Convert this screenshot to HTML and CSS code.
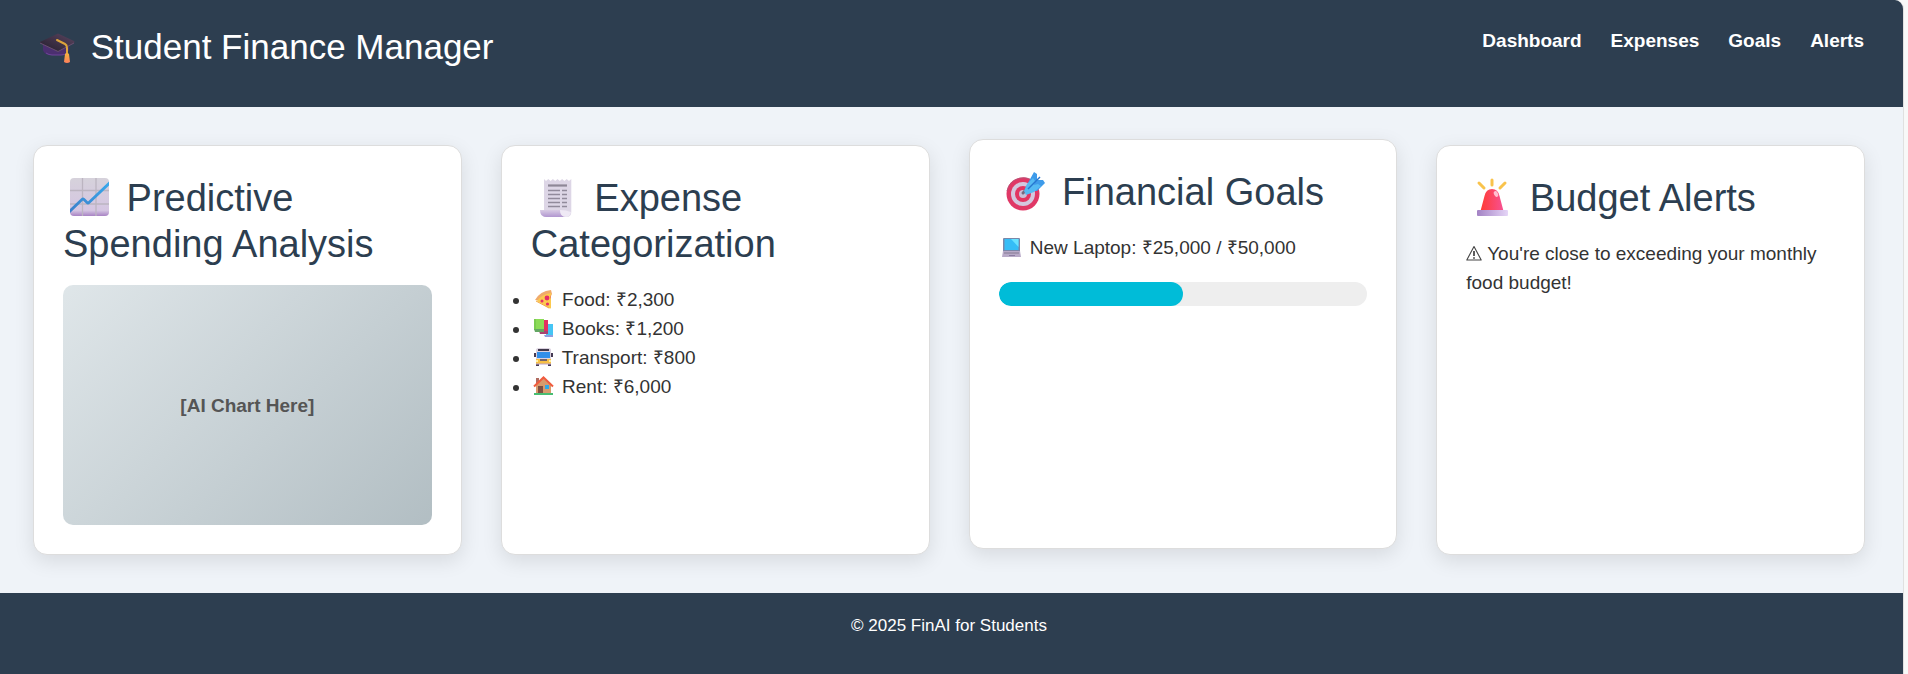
FILE: index.html
```html
<!DOCTYPE html>
<html lang="en">
<head>
<meta charset="utf-8">
<meta name="viewport" content="width=device-width, initial-scale=1">
<title>Student Finance Manager</title>
<link rel="stylesheet" href="styles.css">
</head>
<body>
<div class="page">
  <header class="header">
    <h1 class="title"><svg class="icon-title" viewBox="0 0 47 36" aria-hidden="true">
      <defs>
        <linearGradient id="cap" x1="0" y1="1" x2="1" y2="0"><stop offset="0" stop-color="#231d2c"/><stop offset="1" stop-color="#5b4560"/></linearGradient>
        <linearGradient id="tassel" x1="0" y1="0" x2="0" y2="1"><stop offset="0" stop-color="#f3b33f"/><stop offset="1" stop-color="#ff7f5c"/></linearGradient>
      </defs>
      <path d="M9 14v6q1 5 8 5h10q6 0 8-5v-7z" fill="#4b2f70"/>
      <path d="M12 23q3 2 6 2h9q4 0 6-2" fill="none" stroke="#70439a"/>
      <path d="M6 12 23 4q1-1 2 0l15 7q1 1 0 2l-15 8q-1 1-2 0L6 13z" fill="url(#cap)"/>
      <path d="m6 13 17 8q1 1 2 0l15-8" fill="none" stroke="#685070"/>
      <path d="m23 10 8 4q2 1 2 4v7" fill="none" stroke="#dda43c" stroke-width="2" stroke-linecap="round"/>
      <path d="M31 24q2-2 4 0l1 8q-3 2-6 0z" fill="url(#tassel)"/>
    </svg> Student Finance Manager</h1>
    <nav class="nav" aria-label="Main">
      <a href="#dashboard">Dashboard</a>
      <a href="#expenses">Expenses</a>
      <a href="#goals">Goals</a>
      <a href="#alerts">Alerts</a>
    </nav>
  </header>

  <main class="cards">
    <section class="card" id="dashboard">
      <h2><svg class="icon-heading" viewBox="0 0 53 40" aria-hidden="true">
        <defs>
          <linearGradient id="sheet" x1="0" y1="0" x2="0" y2="1"><stop offset="0" stop-color="#d6d2db"/><stop offset=".85" stop-color="#d5c6e2"/><stop offset="1" stop-color="#a883c4"/></linearGradient>
          <linearGradient id="trend" x1="0" y1="1" x2="1" y2="0"><stop offset="0" stop-color="#3d7fc9"/><stop offset="1" stop-color="#37a9ec"/></linearGradient>
          <clipPath id="sheetclip"><rect x="7" y="1" width="39" height="38" rx="4"/></clipPath>
        </defs>
        <g clip-path="url(#sheetclip)">
          <rect x="7" y="1" width="39" height="38" fill="url(#sheet)"/>
          <path d="M19.500 1v38M33 1v38M7 13.500h39M7 27h39" stroke="#bcb5c1" stroke-width="1.300"/>
          <path d="m6 35 13-12.500q1-1 2 0l3 3q1 1 2 0L47 5.500" fill="none" stroke="url(#trend)" stroke-width="2.800"/>
        </g>
      </svg> Predictive Spending Analysis</h2>
      <div class="chart">[AI Chart Here]</div>
    </section>

    <section class="card" id="expenses">
      <h2><svg class="icon-heading" viewBox="0 0 53 40" aria-hidden="true">
        <defs><linearGradient id="roll" x1="0" y1="0" x2="0" y2="1"><stop offset="0" stop-color="#d8cbe4"/><stop offset="1" stop-color="#b196d0"/></linearGradient></defs>
        <path d="m13 2 2 2 2.300-2 2.300 2 2.300-2 2.300 2 2.300-2 2.300 2 2.300-2 2.300 2 2.300-2 2.300 2 2.300-2v33q0 5-5 5H13z" fill="#ddd6e6"/>
        <path d="M9 33h20q1 7 6 7H15q-6 0-6-7z" fill="url(#roll)"/>
        <path d="M29 33q6 0 11 2-1 5-5 5-6 0-6-7z" fill="#efe9f5"/>
        <path d="M17 8.500h19" stroke="#8e8797" stroke-width="2.200"/>
        <path d="M17 13.500h12m2 0h5M17 17.500h12m2 0h5M17 21.500h12m2 0h5M17 25.500h12m2 0h5M17 29.500h12m2 0h5" stroke="#918a9b" stroke-width="1.400"/>
      </svg> Expense Categorization</h2>
      <ul class="expenses">
        <li><svg class="icon-text" viewBox="0 0 26 20" aria-hidden="true">
          <path d="M4 11Q9 2 20 1l1 4-4 8z" fill="#f0aa6b"/>
          <path d="M6 12Q11 5 20 4v15q-1 1-2 0z" fill="#fcc94e"/>
          <path d="M5 12 18 19" stroke="#f3a83f"/>
          <circle cx="16" cy="9" r="2.400" fill="#e52d68"/><circle cx="11" cy="12" r="1.500" fill="#e52d68"/><circle cx="16.500" cy="15" r="1.600" fill="#e52d68"/><path d="M20 6v4q-1-2 0-4" fill="#e52d68"/>
        </svg> Food: ₹2,300</li>
        <li><svg class="icon-text" viewBox="0 0 26 20" aria-hidden="true">
          <path d="M16 6h6v11h-7z" fill="#45c5f5"/><path d="M13 17h9v2h-8z" fill="#8e9fe0"/>
          <path d="M11 2h6v12h-7z" fill="#e32f62"/><path d="M8 13h9v3H9z" fill="#a74372"/>
          <path d="M3 1h10v11H3z" fill="#8cdb57"/><path d="M3 11h10v3H4z" fill="#63a663"/><path d="M4 1v11" stroke="#68bd4a"/>
        </svg> Books: ₹1,200</li>
        <li><svg class="icon-text" viewBox="0 0 26 20" aria-hidden="true">
          <path d="M5 16h3v3H5zM17 16h3v3h-3zM3 6h2v4H3zM20 6h2v4h-2z" fill="#463b53"/>
          <path d="M5 3q0-2 3-2h9q3 0 3 2v14H5z" fill="#dad1df"/><path d="M7 2h11v2H7z" fill="#40384b"/>
          <path d="M6 5h13v6H6z" fill="#318fe9"/><path d="M5 12h15v5H5z" fill="#f6bf45"/>
          <path d="M9 12h7v2H9z" fill="#73636c"/><path d="M5 13h2v2H5zM18 13h2v2h-2z" fill="#fff0a5"/>
          <path d="M5 17h15" stroke="#bda2ca"/>
        </svg> Transport: ₹800</li>
        <li><svg class="icon-text" viewBox="0 0 26 20" aria-hidden="true">
          <path d="M5 2h3v7H5z" fill="#b06c60"/><path d="M5 9l7-7 8 7v9H5z" fill="#d89b6d"/>
          <path d="M3 10.500 12.500 1.500 22 10.500" fill="none" stroke="#f05b3e" stroke-width="2"/>
          <path d="M7 10h5v8H7z" fill="#805042"/><path d="M14 9h4v4h-4z" fill="#31a8e8"/>
          <path d="M3 17h19v2H3z" fill="#48bd72"/>
        </svg> Rent: ₹6,000</li>
      </ul>
    </section>

    <section class="card card-raised" id="goals">
      <h2><svg class="icon-heading" viewBox="0 0 53 40" aria-hidden="true">
        <circle cx="24" cy="23" r="16.500" fill="#e03866"/><path d="M8 20a16.500 16.500 0 0 1 29-7" fill="none" stroke="#b95377"/>
        <circle cx="24" cy="23" r="12" fill="#d4c7df"/><circle cx="24" cy="23" r="8" fill="#e23562"/><circle cx="24" cy="23" r="4" fill="#cbbfd7"/>
        <path d="m24 22 10-10" stroke="#77687f" stroke-width="3" stroke-linecap="round"/>
        <path d="m30 10 5-9 3 2v6l6 0 2 3-8 8h-6l-3 1-3-3z" fill="#3e9bea"/>
        <path d="m25 20 3-7 6-6 2 3-1 4 4-1 3 2-7 6-8 3z" fill="#55baf3"/>
        <path d="m29 18 12-12" stroke="#2676cf" stroke-width="1.500"/>
      </svg> Financial Goals</h2>
      <label class="goal-label" for="laptop-goal"><svg class="icon-text" viewBox="0 0 26 20" aria-hidden="true">
        <path d="M5 1h15q1 0 1 1v12H4V2q0-1 1-1z" fill="#7987a9"/><path d="M5.500 2h14v11h-14z" fill="#35bdf6"/><path d="M12 2h7.500v8z" fill="#68e2ff"/>
        <path d="M4 14h17l1 6H3z" fill="#b8aac8"/><path d="M5 16h15" stroke="#847b92"/><path d="M10 18h6v1h-6z" fill="#8a7ca0"/>
      </svg> New Laptop: ₹25,000 / ₹50,000</label>
      <progress class="progress" id="laptop-goal" value="25000" max="50000"></progress>
    </section>

    <section class="card" id="alerts">
      <h2><svg class="icon-heading" viewBox="0 0 53 40" aria-hidden="true">
        <defs>
          <linearGradient id="lamp"><stop offset="0" stop-color="#ff3b34"/><stop offset="1" stop-color="#f75193"/></linearGradient>
          <linearGradient id="base"><stop offset="0" stop-color="#a382c4"/><stop offset="1" stop-color="#e5d5f7"/></linearGradient>
        </defs>
        <path d="m13 6 5 5M26 3v5M39 6l-5 5" stroke="#f9c34c" stroke-width="3" stroke-linecap="round"/>
        <path d="m14.500 34 4-15q1.500-7 7.500-7t7.500 7l4 15z" fill="url(#lamp)"/><ellipse cx="30" cy="17" rx="2" ry="3" fill="#ffbfd0" transform="rotate(-25 30 17)"/>
        <rect x="11" y="33" width="31" height="6" rx="1" fill="url(#base)"/>
      </svg> Budget Alerts</h2>
      <p><svg class="icon-warning" viewBox="0 0 16 16" aria-hidden="true">
        <path d="M8 1.500 15.200 15H.8z" fill="none" stroke="#444" stroke-width="1.100" stroke-linejoin="round"/><path d="M8 6v5M8 12.200v1.500" stroke="#333" stroke-width="1.600"/>
      </svg> You're close to exceeding your monthly food budget!</p>
    </section>
  </main>

  <footer class="footer"><p>© 2025 FinAI for Students</p></footer>
</div>
</body>
</html>
```

FILE: styles.css
```css
* {
  box-sizing: border-box;
}

body {
  margin: 0;
  background: #f8f8f8;
  color: #333;
  font-family: "Liberation Sans", Arial, sans-serif;
  font-size: 19px;
  line-height: 29px;
}

h1,
h2,
p,
ul {
  margin: 0;
}

.page {
  display: flex;
  flex-direction: column;
  min-height: 100vh;
  margin-right: 4px;
  overflow: hidden;
  border-right: 1px solid #e0e0e0;
  border-top-right-radius: 9px;
  background: #eff3f8;
}

.header {
  display: flex;
  flex-wrap: wrap;
  justify-content: space-between;
  align-items: flex-start;
  gap: 16px;
  padding: 26px 39px 39px 34px;
  background: #2d3e50;
  color: #fff;
}

.title {
  font-size: 35px;
  font-weight: 400;
  line-height: 42px;
}

.nav {
  display: flex;
  flex-wrap: wrap;
  gap: 29px;
}

.nav a {
  color: #fff;
  font-weight: 700;
  text-decoration: none;
}

.icon-title {
  width: 47px;
  height: 36px;
  vertical-align: -7px;
}

.icon-heading {
  width: 53px;
  height: 40px;
  vertical-align: -6px;
}

.icon-text {
  width: 26px;
  height: 20px;
  vertical-align: -3px;
}

.icon-warning {
  width: 16px;
  height: 16px;
  vertical-align: -1px;
}

.cards {
  display: grid;
  grid-template-columns: repeat(auto-fit, minmax(320px, 1fr));
  gap: 39px;
  padding: 38px 38px 38px 33px;
}

.card {
  padding: 29px;
  border: 1px solid #ddd;
  border-radius: 14px;
  background: #fff;
  box-shadow: 0 6px 20px rgba(0, 0, 0, 0.1);
}

.card-raised {
  transform: translateY(-6px);
}

.card h2 {
  margin-bottom: 18px;
  color: #2c3e50;
  font-size: 38px;
  font-weight: 400;
  line-height: 46px;
}

.chart {
  display: flex;
  align-items: center;
  justify-content: center;
  height: 240px;
  border-radius: 10px;
  background: linear-gradient(135deg, #dfe6e9, #b2bec3);
  color: #555;
  font-weight: 700;
}

.expenses {
  padding: 0;
}

.goal-label {
  display: block;
  margin-bottom: 20px;
}

.progress {
  display: block;
  width: 100%;
  height: 24px;
  overflow: hidden;
  appearance: none;
  border: 0;
  border-radius: 12px;
  background: #eee;
}

.progress::-webkit-progress-bar {
  background: #eee;
}

.progress::-webkit-progress-value {
  border-radius: 12px;
  background: #00bcd8;
}

.progress::-moz-progress-bar {
  border-radius: 12px;
  background: #00bcd8;
}

.footer {
  flex: 1;
  padding: 20px 10px 20px 5px;
  background: #2d3e50;
  color: #fff;
  font-size: 17px;
  line-height: 26px;
  text-align: center;
}

.footer p {
  margin: 0;
}
```
